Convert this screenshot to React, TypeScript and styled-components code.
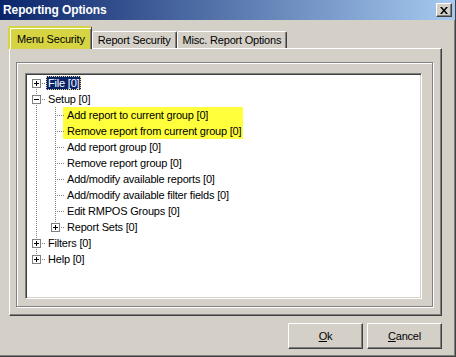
import { createGlobalStyle } from "styled-components"
import styled from "styled-components"

const GlobalStyle = createGlobalStyle`
  html, body {
    margin: 0;
    padding: 0;
    background: #d4d0c8;
  }
`

const Window = styled.div`
  width: 456px;
  height: 357px;
  box-sizing: border-box;
  display: flex;
  flex-direction: column;
  background: #d4d0c8;
  border-right: 1px solid #404040;
  border-bottom: 1px solid #404040;
  box-shadow: inset -1px -1px 0 #808080;
  font-family: "Liberation Sans", Arial, sans-serif;
  font-size: 11px;
  letter-spacing: -0.2px;
  color: #000;
`

const TitleBar = styled.div`
  height: 20px;
  flex-shrink: 0;
  display: flex;
  align-items: center;
  justify-content: space-between;
  padding: 0 3px 0 3px;
  background: linear-gradient(to right, #0a246a, #a6caf0);
  color: #fff;
  font-weight: bold;
  font-size: 12px;
  letter-spacing: -0.1px;
`

const CloseButton = styled.div`
  width: 16px;
  height: 14px;
  box-sizing: border-box;
  display: flex;
  align-items: center;
  justify-content: center;
  background: #d4d0c8;
  border-top: 1px solid #fff;
  border-left: 1px solid #fff;
  border-right: 1px solid #404040;
  border-bottom: 1px solid #404040;
  box-shadow: inset -1px -1px 0 #808080;
`

const Content = styled.div`
  flex: 1;
  display: flex;
  flex-direction: column;
  padding: 0 13px 0 9px;
`

const TabStrip = styled.div`
  height: 28px;
  display: flex;
  align-items: flex-end;
  position: relative;
  z-index: 1;
`

const Tab = styled.div<{ $active?: boolean }>`
  box-sizing: border-box;
  height: ${(p) => (p.$active ? "23px" : "17px")};
  margin-bottom: ${(p) => (p.$active ? "-1px" : "0")};
  margin-left: ${(p) => (p.$active ? "-1px" : "0")};
  padding: ${(p) => (p.$active ? "2px 6px 0 8px" : "0 5px")};
  display: flex;
  align-items: center;
  white-space: nowrap;
  background: ${(p) => (p.$active ? "#d7d444" : "#d4d0c8")};
  border-top: 1px solid ${(p) => (p.$active ? "#d7d444" : "#fff")};
  border-left: 1px solid ${(p) => (p.$active ? "#d7d444" : "#fff")};
  border-right: 1px solid #404040;
  border-radius: 2px 2px 0 0;
  box-shadow: ${(p) =>
    p.$active
      ? "inset 1px 1px 0 #d7d444, inset 2px 2px 0 #fff, inset -1px 0 0 #808080"
      : "inset -1px 0 0 #808080"};
`

const Panel = styled.div`
  height: 268px;
  box-sizing: border-box;
  display: flex;
  padding: 13px 8px 8px 6px;
  border-top: 1px solid #fff;
  border-left: 1px solid #fff;
  border-right: 1px solid #404040;
  border-bottom: 1px solid #404040;
  box-shadow: inset -1px -1px 0 #808080;
`

const Frame = styled.div`
  flex: 1;
  display: flex;
  padding: 10px 10px 7px 8px;
  border: 1px solid #808080;
  box-shadow: inset 1px 1px 0 #fff, 1px 1px 0 #fff;
`

const Tree = styled.div`
  flex: 1;
  display: flex;
  flex-direction: column;
  padding: 1px 0 0 1px;
  background: #fff;
  border-top: 1px solid #808080;
  border-left: 1px solid #808080;
  border-right: 1px solid #fff;
  border-bottom: 1px solid #fff;
  box-shadow: inset 1px 1px 0 #404040, inset -1px -1px 0 #d4d0c8;
`

const Row = styled.div`
  height: 16px;
  display: flex;
  align-items: center;
`

const Gutter = styled.div<{ $up?: boolean; $down?: boolean; $right?: boolean }>`
  position: relative;
  width: 19px;
  height: 16px;
  flex-shrink: 0;
  display: flex;
  align-items: center;
  justify-content: center;

  &::before {
    content: "";
    display: ${(p) => (p.$up || p.$down ? "block" : "none")};
    position: absolute;
    left: 9px;
    width: 1px;
    top: ${(p) => (p.$up ? "0" : "8px")};
    bottom: ${(p) => (p.$down ? "0" : "8px")};
    background: repeating-linear-gradient(to bottom, #808080 0 1px, transparent 1px 2px);
  }

  &::after {
    content: "";
    display: ${(p) => (p.$right ? "block" : "none")};
    position: absolute;
    top: 8px;
    left: 10px;
    right: 0;
    height: 1px;
    background: repeating-linear-gradient(to right, transparent 0 1px, #808080 1px 2px);
  }
`

const Expander = styled.div<{ $open?: boolean }>`
  position: relative;
  z-index: 1;
  width: 9px;
  height: 9px;
  box-sizing: border-box;
  margin-top: 1px;
  border: 1px solid #808080;
  background: #fff;

  &::before {
    content: "";
    position: absolute;
    left: 1px;
    top: 3px;
    width: 5px;
    height: 1px;
    background: #000;
  }

  &::after {
    content: "";
    display: ${(p) => (p.$open ? "none" : "block")};
    position: absolute;
    left: 3px;
    top: 1px;
    width: 1px;
    height: 5px;
    background: #000;
  }
`

const Label = styled.span<{ $selected?: boolean; $marked?: boolean }>`
  white-space: nowrap;
  box-sizing: border-box;
  height: ${(p) => (p.$marked ? "16px" : "14px")};
  line-height: ${(p) => (p.$selected ? "12px" : p.$marked ? "16px" : "14px")};
  padding: ${(p) => (p.$selected ? "0 1px" : p.$marked ? "0 0 0 4px" : "0 2px")};
  margin-left: ${(p) => (p.$marked ? "-2px" : "0")};
  width: ${(p) => (p.$marked ? "180px" : "auto")};
  background: ${(p) => (p.$selected ? "#0a246a" : p.$marked ? "#ffff3c" : "transparent")};
  color: ${(p) => (p.$selected ? "#fff" : "#000")};
  border: ${(p) => (p.$selected ? "1px dotted #f3d68a" : "none")};
`

const Footer = styled.div`
  display: flex;
  justify-content: flex-end;
  gap: 4px;
  padding-top: 7px;
`

const Button = styled.div`
  width: 75px;
  height: 26px;
  box-sizing: border-box;
  display: flex;
  align-items: center;
  justify-content: center;
  background: #d4d0c8;
  border-top: 1px solid #fff;
  border-left: 1px solid #fff;
  border-right: 1px solid #404040;
  border-bottom: 1px solid #404040;
  box-shadow: inset -1px -1px 0 #808080;
`

type Guide = { up?: boolean; down?: boolean; right?: boolean; box?: "+" | "-" }

type Node = {
  label: string
  cols: Guide[]
  selected?: boolean
  marked?: boolean
}

const pass: Guide = { up: true, down: true }
const leaf: Guide = { up: true, down: true, right: true }

const nodes: Node[] = [
  { label: "File [0]", cols: [{ down: true, right: true, box: "+" }], selected: true },
  { label: "Setup [0]", cols: [{ up: true, down: true, right: true, box: "-" }] },
  { label: "Add report to current group [0]", cols: [pass, leaf], marked: true },
  { label: "Remove report from current group [0]", cols: [pass, leaf], marked: true },
  { label: "Add report group [0]", cols: [pass, leaf] },
  { label: "Remove report group [0]", cols: [pass, leaf] },
  { label: "Add/modify available reports [0]", cols: [pass, leaf] },
  { label: "Add/modify available filter fields [0]", cols: [pass, leaf] },
  { label: "Edit RMPOS Groups [0]", cols: [pass, leaf] },
  { label: "Report Sets [0]", cols: [pass, { up: true, right: true, box: "+" }] },
  { label: "Filters [0]", cols: [{ up: true, down: true, right: true, box: "+" }] },
  { label: "Help [0]", cols: [{ up: true, right: true, box: "+" }] },
]

export default function App() {
  return (
    <>
      <GlobalStyle />
      <Window>
        <TitleBar>
          <span>Reporting Options</span>
          <CloseButton>
            <svg width="8" height="7" viewBox="0 0 8 7">
              <path d="M0 0h2l2 2.5L6 0h2L5 3.5 8 7H6L4 4.5 2 7H0l3-3.5z" fill="#000" />
            </svg>
          </CloseButton>
        </TitleBar>
        <Content>
          <TabStrip>
            <Tab $active>Menu Security</Tab>
            <Tab>Report Security</Tab>
            <Tab>Misc. Report Options</Tab>
          </TabStrip>
          <Panel>
            <Frame>
              <Tree>
                {nodes.map((n) => (
                  <Row key={n.label}>
                    {n.cols.map((c, i) => (
                      <Gutter key={i} $up={c.up} $down={c.down} $right={c.right}>
                        {c.box && <Expander $open={c.box === "-"} />}
                      </Gutter>
                    ))}
                    <Label $selected={n.selected} $marked={n.marked}>
                      {n.label}
                    </Label>
                  </Row>
                ))}
              </Tree>
            </Frame>
          </Panel>
          <Footer>
            <Button>
              <span>
                <u>O</u>k
              </span>
            </Button>
            <Button>
              <span>
                <u>C</u>ancel
              </span>
            </Button>
          </Footer>
        </Content>
      </Window>
    </>
  )
}
